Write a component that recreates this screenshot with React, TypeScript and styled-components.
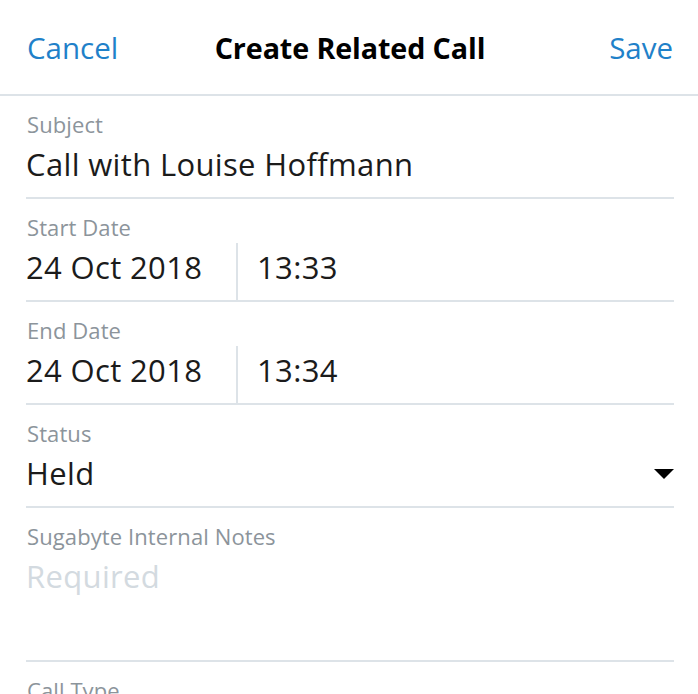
import React from "react";
import styled, { createGlobalStyle } from "styled-components";

const Global = createGlobalStyle`
  html, body { margin: 0; padding: 0; background: #fff; }
  body { font-family: "Open Sans", "Noto Sans", sans-serif; -webkit-font-smoothing: antialiased; }
  * { box-sizing: border-box; }
`;

const Page = styled.div`
  width: 698px;
  height: 694px;
  overflow: hidden;
  background: #fff;
`;

const Header = styled.header`
  height: 96px;
  display: grid;
  grid-template-columns: 1fr auto 1fr;
  align-items: center;
  padding: 0 25px 0 27px;
  border-bottom: 2px solid #dde3e8;
`;

const HeaderButton = styled.button<{ $end?: boolean }>`
  border: 0;
  background: none;
  padding: 0;
  font-family: inherit;
  font-size: 29.5px;
  color: #1f81c9;
  line-height: 1;
  margin-top: 2px;
  justify-self: ${(p) => (p.$end ? "end" : "start")};
`;

const Title = styled.h1`
  margin: 2px 0 0 0;
  font-size: 28.7px;
  font-weight: 700;
  color: #000;
  letter-spacing: -0.1px;
  line-height: 1;
`;

const Form = styled.div`
  padding: 0 24px 0 26px;
`;

const Field = styled.div<{ $tall?: boolean }>`
  height: ${(p) => (p.$tall ? "154px" : "103px")};
  border-bottom: 2px solid #dde3e8;
  display: flex;
  flex-direction: column;
  padding-top: 15px;
`;

const Label = styled.div`
  font-size: 22px;
  color: #8c949b;
  line-height: 26px;
  letter-spacing: 0.1px;
  padding-left: 1px;
`;

const ValueRow = styled.div<{ $spread?: boolean }>`
  flex: 1;
  display: flex;
  align-items: ${(p) => (p.$spread ? "flex-start" : "stretch")};
  justify-content: ${(p) => (p.$spread ? "space-between" : "flex-start")};
  margin-top: 3px;
`;

const Value = styled.div<{ $placeholder?: boolean }>`
  font-size: 31px;
  line-height: 40px;
  letter-spacing: 0.35px;
  color: ${(p) => (p.$placeholder ? "#d3dae0" : "#1b1b1b")};
  margin-top: 4px;
`;

const DatePart = styled.div`
  width: 212px;
  border-right: 2px solid #dde3e8;
  display: flex;
  align-items: flex-start;
`;

const TimePart = styled.div`
  padding-left: 19px;
`;

const Caret = styled.svg`
  width: 20px;
  height: 10px;
  margin-top: 20px;
`;

const DateField = ({ label, date, time }: { label: string; date: string; time: string }) => (
  <Field>
    <Label>{label}</Label>
    <ValueRow>
      <DatePart>
        <Value>{date}</Value>
      </DatePart>
      <TimePart>
        <Value>{time}</Value>
      </TimePart>
    </ValueRow>
  </Field>
);

export default function App() {
  return (
    <Page>
      <Global />
      <Header>
        <HeaderButton>Cancel</HeaderButton>
        <Title>Create Related Call</Title>
        <HeaderButton $end>Save</HeaderButton>
      </Header>
      <Form>
        <Field>
          <Label>Subject</Label>
          <ValueRow>
            <Value>Call with Louise Hoffmann</Value>
          </ValueRow>
        </Field>
        <DateField label="Start Date" date="24 Oct 2018" time="13:33" />
        <DateField label="End Date" date="24 Oct 2018" time="13:34" />
        <Field>
          <Label>Status</Label>
          <ValueRow $spread>
            <Value>Held</Value>
            <Caret viewBox="0 0 20 10">
              <path d="M0 0 H20 L10 10 Z" fill="#000" />
            </Caret>
          </ValueRow>
        </Field>
        <Field $tall>
          <Label>Sugabyte Internal Notes</Label>
          <ValueRow>
            <Value $placeholder>Required</Value>
          </ValueRow>
        </Field>
        <Field>
          <Label>Call Type</Label>
        </Field>
      </Form>
    </Page>
  );
}
